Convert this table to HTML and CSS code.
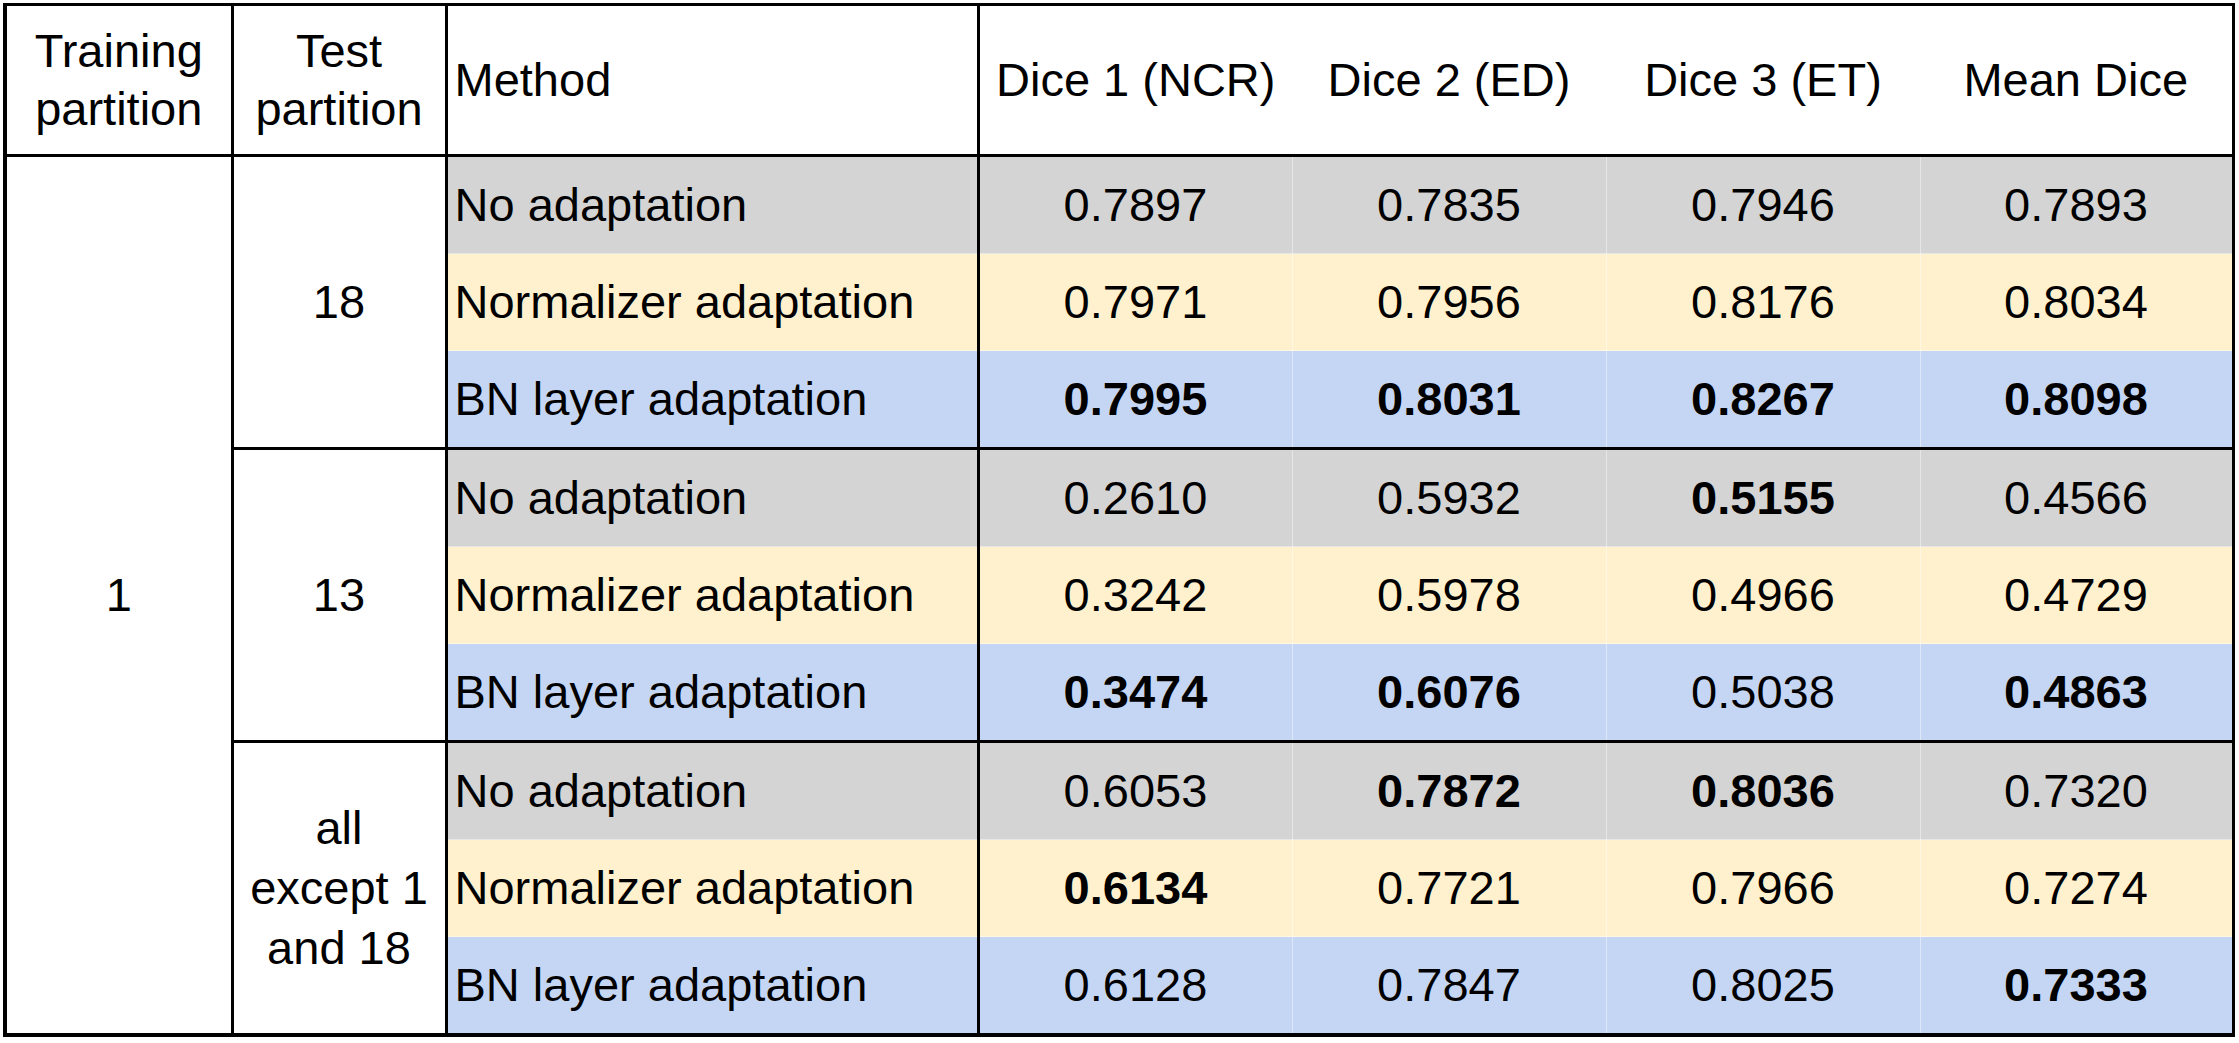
FILE: index.html
```html
<!DOCTYPE html>
<html lang="en">
<head>
<meta charset="utf-8">
<title>Adaptation results</title>
<link rel="stylesheet" href="styles.css">
</head>
<body>
<div class="wrap">
<table class="results">
  <colgroup>
    <col class="c-train">
    <col class="c-test">
    <col class="c-method">
    <col class="c-num">
    <col class="c-num">
    <col class="c-num">
    <col class="c-num-last">
  </colgroup>
  <thead>
    <tr class="head">
      <th class="center">Training<br>partition</th>
      <th class="center">Test<br>partition</th>
      <th class="method-h">Method</th>
      <th class="center">Dice 1 (NCR)</th>
      <th class="center">Dice 2 (ED)</th>
      <th class="center">Dice 3 (ET)</th>
      <th class="center">Mean Dice</th>
    </tr>
  </thead>
  <tbody>
    <tr class="row none group-start">
      <td class="span-cell" rowspan="9">1</td>
      <td class="span-cell" rowspan="3">18</td>
      <td class="method">No adaptation</td>
      <td>0.7897</td><td>0.7835</td><td>0.7946</td><td>0.7893</td>
    </tr>
    <tr class="row norm">
      <td class="method">Normalizer adaptation</td>
      <td>0.7971</td><td>0.7956</td><td>0.8176</td><td>0.8034</td>
    </tr>
    <tr class="row bn">
      <td class="method">BN layer adaptation</td>
      <td class="b">0.7995</td><td class="b">0.8031</td><td class="b">0.8267</td><td class="b">0.8098</td>
    </tr>
    <tr class="row none group-start">
      <td class="span-cell" rowspan="3">13</td>
      <td class="method">No adaptation</td>
      <td>0.2610</td><td>0.5932</td><td class="b">0.5155</td><td>0.4566</td>
    </tr>
    <tr class="row norm">
      <td class="method">Normalizer adaptation</td>
      <td>0.3242</td><td>0.5978</td><td>0.4966</td><td>0.4729</td>
    </tr>
    <tr class="row bn">
      <td class="method">BN layer adaptation</td>
      <td class="b">0.3474</td><td class="b">0.6076</td><td>0.5038</td><td class="b">0.4863</td>
    </tr>
    <tr class="row none group-start">
      <td class="span-cell multi" rowspan="3">all<br>except 1<br>and 18</td>
      <td class="method">No adaptation</td>
      <td>0.6053</td><td class="b">0.7872</td><td class="b">0.8036</td><td>0.7320</td>
    </tr>
    <tr class="row norm">
      <td class="method">Normalizer adaptation</td>
      <td class="b">0.6134</td><td>0.7721</td><td>0.7966</td><td>0.7274</td>
    </tr>
    <tr class="row bn">
      <td class="method">BN layer adaptation</td>
      <td>0.6128</td><td>0.7847</td><td>0.8025</td><td class="b">0.7333</td>
    </tr>
  </tbody>
</table>
</div>
</body>
</html>
```
FILE: styles.css
```css
html, body {
  margin: 0;
  padding: 0;
  background: #ffffff;
}

.wrap {
  padding: 3px 0 0 3px;
}

.results {
  border-collapse: collapse;
  table-layout: fixed;
  width: 2230px;
  font-family: "Liberation Sans", Arial, sans-serif;
  font-size: 47px;
  color: #000000;
  border: 3px solid #000000;
  border-left-width: 4px;
  border-bottom-width: 4px;
}

.c-train { width: 227px; }
.c-test { width: 214px; }
.c-method { width: 532px; }
.c-num { width: 314px; }
.c-num-last { width: 313px; }

.results th,
.results td {
  padding: 0;
  vertical-align: middle;
  text-align: center;
  font-weight: normal;
  line-height: 1.24;
  border: 1px solid rgba(255, 255, 255, 0.45);
}

.head th {
  height: 148px;
  background: #ffffff;
  border: 3px solid #000000;
}

.head th.center {
  border-left: none;
  border-right: none;
}

.head th:nth-child(1),
.head th:nth-child(2),
.head th:nth-child(3),
.head th:last-child {
  border-right: 3px solid #000000;
}

.results .method-h,
.results .method {
  text-align: left;
  padding-left: 7px;
  white-space: nowrap;
}

.results .method {
  border-left: 3px solid #000000;
  border-right: 3px solid #000000;
}

.row td {
  height: 96px;
}

.none td { background: #d4d4d4; }
.norm td { background: #fff1cd; }
.bn td { background: #c4d6f4; }

.results td.span-cell {
  background: #ffffff;
  border: 3px solid #000000;
}

.results td.multi {
  line-height: 1.28;
}

.group-start td {
  border-top: 3px solid #000000;
}

.results td.b {
  font-weight: bold;
}

.results td:last-child {
  border-right: 3px solid #000000;
}
```
